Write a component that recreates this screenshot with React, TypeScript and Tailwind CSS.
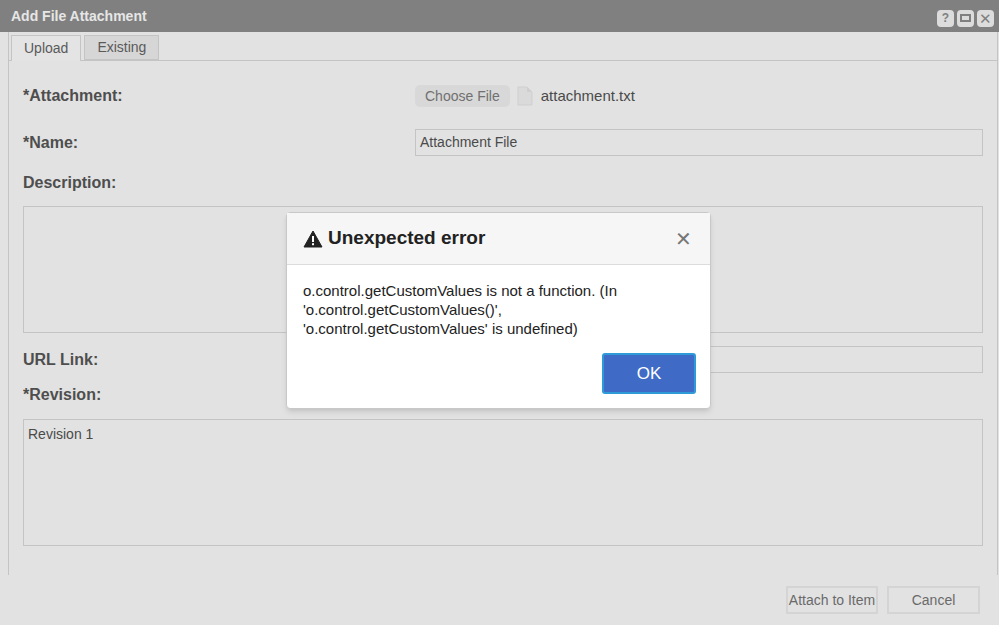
import React from "react";

export default function App() {
  const f = { fontFamily: '"Liberation Sans", Arial, sans-serif' };
  return (
    <div style={f} className="relative w-[999px] h-[625px] bg-[#e2e2e2] overflow-hidden text-[#5a5a5a]">
      <div className="h-[32px] bg-[#808080] flex items-center justify-between pl-[11px] pr-[5px]">
        <span className="text-[#e6e6e6] font-bold text-[14px]">Add File Attachment</span>
        <div className="flex gap-[3px] mt-[4px]">
          <div className="w-[17px] h-[17px] rounded-[4px] bg-[#dcdcdc] flex items-center justify-center text-[#808080] text-[12px] font-bold">?</div>
          <div className="w-[17px] h-[17px] rounded-[4px] bg-[#dcdcdc] flex items-center justify-center"><div className="w-[11px] h-[8px] border-2 border-[#808080]" /></div>
          <div className="w-[17px] h-[17px] rounded-[4px] bg-[#dcdcdc] flex items-center justify-center text-[#808080] text-[15px] leading-none">✕</div>
        </div>
      </div>
      <div className="border-l border-[#c4c4c4] ml-[8px] border-r mr-[1px] h-[543px] flex flex-col">
        <div className="flex gap-[3px] pl-[2px] pt-[3px] border-b border-[#c4c4c4]">
          <div className="h-[26px] px-[12px] border border-b-0 border-[#c4c4c4] bg-[#e4e4e4] text-[14px] flex items-center mb-[-1px]">Upload</div>
          <div className="h-[25px] px-[12px] border border-[#c4c4c4] bg-[#d6d6d6] text-[14px] flex items-center">Existing</div>
        </div>
        <div className="px-[14px] pt-[24px] text-[15px]">
          <div className="flex items-center h-[22px]">
            <div className="w-[392px] font-bold text-[16px] text-[#4e4e4e]">*Attachment:</div>
            <div className="h-[22px] px-[10px] rounded-[5px] bg-[#d8d8d8] text-[14px] flex items-center text-[#707070]">Choose File</div>
            <svg width="16" height="20" viewBox="0 0 16 20" className="ml-[7px]"><path d="M1 1h9l5 5v13H1z" fill="#dadada" stroke="#cfcfcf"/><path d="M10 1v5h5" fill="#cfcfcf"/></svg>
            <span className="ml-[8px] text-[#4a4a4a]">attachment.txt</span>
          </div>
          <div className="flex items-center mt-[22px]">
            <div className="w-[392px] font-bold text-[16px] text-[#4e4e4e]">*Name:</div>
            <div className="flex-1 h-[27px] border border-[#c4c4c4] flex items-center px-[4px] text-[14px] text-[#4a4a4a]">Attachment File</div>
          </div>
          <div className="font-bold text-[16px] mt-[15px] text-[#4e4e4e]">Description:</div>
          <div className="h-[127px] border border-[#c4c4c4] mt-[11px]" />
          <div className="flex items-center mt-[13px]">
            <div className="w-[392px] font-bold text-[16px] text-[#4e4e4e]">URL Link:</div>
            <div className="flex-1 h-[27px] border border-[#c4c4c4]" />
          </div>
          <div className="font-bold text-[16px] mt-[10px] text-[#4e4e4e]">*Revision:</div>
          <div className="h-[127px] border border-[#c4c4c4] mt-[12px] px-[4px] pt-[4px] text-[14px] text-[#4a4a4a]">Revision 1</div>
        </div>
      </div>
      <div className="flex justify-end gap-[9px] pr-[19px] pt-[11px]">
        <div className="w-[92px] h-[28px] border-2 border-[#d4d4d4] flex items-center justify-center text-[14px] text-[#6a6a6a]">Attach to Item</div>
        <div className="w-[93px] h-[28px] border-2 border-[#d4d4d4] flex items-center justify-center text-[14px] text-[#6a6a6a]">Cancel</div>
      </div>

      <div className="absolute left-[286px] top-[212px] w-[425px] h-[197px] bg-white rounded-[4px] border border-[#c8c8c8] shadow-md">
        <div className="h-[52px] bg-[#f6f6f6] border-b border-[#dcdcdc] flex items-center justify-between pl-[16px] pr-[18px]">
          <div className="flex items-center gap-[5px]">
            <svg width="20" height="18" viewBox="0 0 20 18"><path d="M10 1L19 17H1z" fill="#222" stroke="#222" strokeLinejoin="round"/><rect x="9" y="6" width="2" height="6" fill="#fff"/><rect x="9" y="13.2" width="2" height="2" fill="#fff"/></svg>
            <span className="font-bold text-[19px] text-[#222]">Unexpected error</span>
          </div>
          <span className="text-[#777] text-[20px] leading-none">✕</span>
        </div>
        <div className="px-[16px] pt-[16px] text-[15px] leading-[19px] text-[#222]">
          o.control.getCustomValues is not a function. (In<br />'o.control.getCustomValues()',<br />'o.control.getCustomValues' is undefined)
        </div>
        <div className="flex justify-end pr-[14px] mt-[15px]">
          <div className="w-[94px] h-[41px] rounded-[3px] bg-[#3f6bc6] border-2 border-[#2f9ad8] flex items-center justify-center text-white text-[17px]">OK</div>
        </div>
      </div>
    </div>
  );
}
